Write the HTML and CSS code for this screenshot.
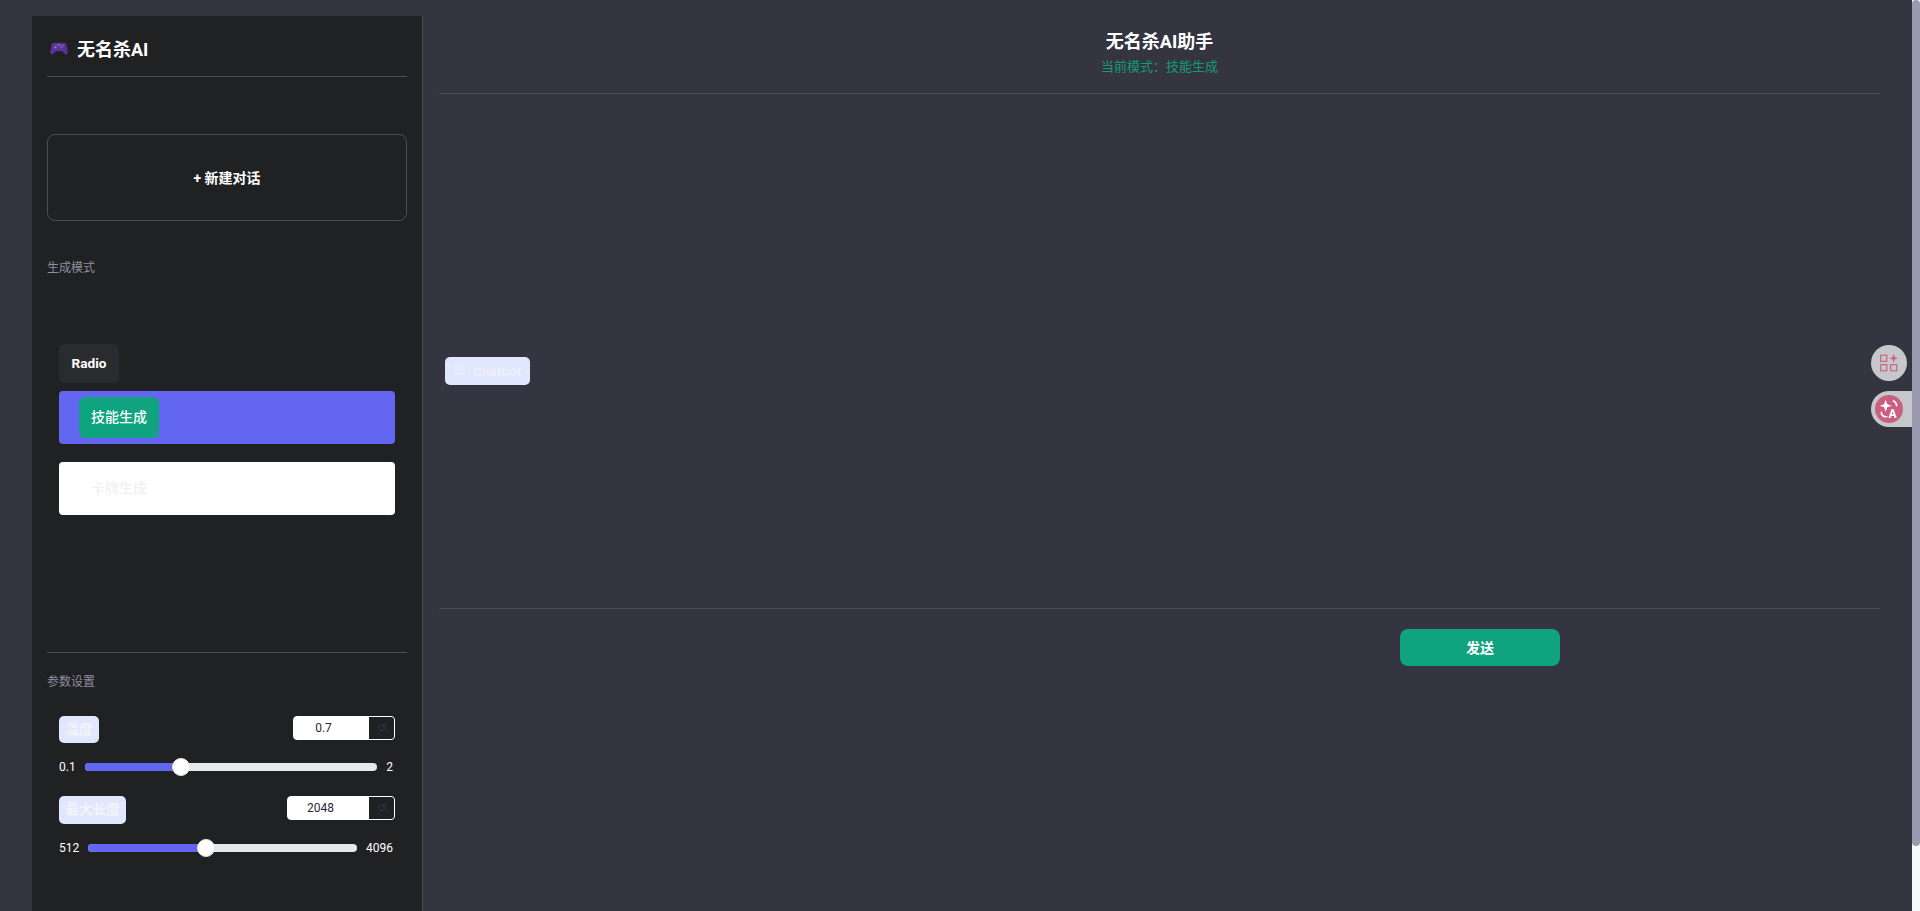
FILE: index.html
```html
<!doctype html>
<html lang="zh-CN">
<head>
	<meta charset="UTF-8">
	<title>无名杀AI助手</title>
	<link rel="stylesheet" href="styles.css">
</head>
<body>
	<div class="app">
		<aside class="sidebar">
			<div class="brand">
				<svg class="brand-icon" width="18" height="15" viewBox="0 0 20 16">
					<path d="M5 1.500h10c2 0 3 1.200 3.500 3.500l1.200 7c.3 2-1.700 3-3.200 1.700L13.500 11h-7l-3 2.700C2 15 0 14 .3 12l1.200-7C2 2.700 3 1.500 5 1.500z" fill="#5b3296"/>
					<circle cx="6" cy="6.500" r="1.300" fill="#8f74c4"/>
					<circle cx="9" cy="4" r=".7" fill="#b9a7e0"/>
					<circle cx="11" cy="4" r=".7" fill="#b9a7e0"/>
					<circle cx="14" cy="5" r=".9" fill="#4db4d8"/>
					<circle cx="12.500" cy="7" r=".9" fill="#d85a9a"/>
				</svg>
				<span class="brand-name">无名杀AI</span>
			</div>
			<button class="new-chat">+ 新建对话</button>
			<div class="section-title">生成模式</div>
			<div class="mode-group">
				<span class="tag-dark">Radio</span>
				<div class="mode-row mode-active"><span class="mode-pill">技能生成</span></div>
				<div class="mode-row"><span class="mode-pill">卡牌生成</span></div>
			</div>
			<div class="params">
				<div class="section-title">参数设置</div>
				<div class="param-head">
					<span class="tag-light">温度</span>
					<div class="num-box">
						<span class="num-value">0.7</span>
						<span class="num-reset">↺</span>
					</div>
				</div>
				<div class="slider-row">
					<span>0.1</span>
					<div class="track"><div class="fill" style="width:33%"><i class="thumb"></i></div></div>
					<span>2</span>
				</div>
				<div class="param-head param-second">
					<span class="tag-light">最大长度</span>
					<div class="num-box num-wide">
						<span class="num-value">2048</span>
						<span class="num-reset">↺</span>
					</div>
				</div>
				<div class="slider-row">
					<span>512</span>
					<div class="track"><div class="fill" style="width:44%"><i class="thumb"></i></div></div>
					<span>4096</span>
				</div>
			</div>
		</aside>
		<main class="main">
			<header class="main-head">
				<h1>无名杀AI助手</h1>
				<p>当前模式：技能生成</p>
			</header>
			<section class="chat">
				<span class="chat-label">
					<svg width="12" height="12" viewBox="0 0 12 12" fill="none" stroke="#eef0fb" stroke-width="1">
						<path d="M1 1.500h10v7H7.500L6 10.500 4.500 8.500H1z"/>
						<path d="M3 4h6"/>
					</svg>
					Chatbot
				</span>
			</section>
			<div class="send-row">
				<button class="send">发送</button>
			</div>
		</main>
	</div>
	<div class="float-tools">
		<div class="float-btn">
			<svg width="20" height="20" viewBox="0 0 18 18" fill="none" stroke="#c9607f" stroke-width="1">
				<rect x="1.500" y="2" width="5.500" height="5.500"/>
				<rect x="1.500" y="10.500" width="5.500" height="5.500"/>
				<rect x="10.500" y="10.500" width="5.500" height="5.500"/>
				<path d="M13.200 1l1 2.800 2.800 1-2.800 1-1 2.800-1-2.800-2.800-1 2.800-1z" fill="#c9607f" stroke="none"/>
			</svg>
		</div>
		<div class="float-btn float-wide">
			<span class="float-dot">
				<svg width="22" height="22" viewBox="0 0 20 20" fill="none" stroke="#fff" stroke-width="1.500">
					<path d="M7 1.500l1.400 4.100L12.500 7 8.400 8.400 7 12.500 5.600 8.400 1.500 7l4.100-1.400z" fill="#fff" stroke="none"/>
					<path d="M13.500 2.500c2 .8 3.500 2.500 3.500 5"/>
					<path d="M3 12.500c0 2.500 1.500 4.500 4 4.500h1.500"/>
					<text x="9.500" y="18" font-size="11" font-weight="700" fill="#fff" stroke="none" font-family="Roboto">A</text>
				</svg>
			</span>
		</div>
	</div>
	<div class="scrollbar"><div class="scroll-thumb"></div></div>
</body>
</html>
```

FILE: styles.css
```css
* {
	box-sizing: border-box;
}
html {
	overflow: hidden;
}
body {
	margin: 0;
	background: #353541;
	color: #fff;
	font-family: Roboto, "Noto Sans CJK SC", sans-serif;
}
.app {
	display: flex;
	height: 911px;
	padding: 16px 0 0 32px;
	overflow: hidden;
}

/* left column */
.sidebar {
	display: flex;
	flex-direction: column;
	flex: none;
	width: 391px;
	padding: 0 15px;
	background: #202123;
	border-right: 1px solid #4d4d4f;
}
.brand {
	display: flex;
	align-items: center;
	flex: none;
	height: 61px;
	padding: 4px 0 0 3px;
	gap: 9px;
	border-bottom: 1px solid #4d4d4f;
}
.brand-name {
	font-size: 18px;
	font-weight: 700;
}
.new-chat {
	flex: none;
	height: 87px;
	margin-top: 57px;
	padding: 0 0 2px;
	background: transparent;
	border: 1px solid #4d4d4f;
	border-radius: 8px;
	color: #fff;
	font: inherit;
	font-size: 14px;
	font-weight: 700;
}
.section-title {
	font-size: 12px;
	line-height: 18px;
	color: #8e8ea0;
}
.sidebar > .section-title {
	margin-top: 38px;
}
.mode-group {
	display: flex;
	flex-direction: column;
	align-items: flex-start;
	flex: none;
	height: 376px;
	padding: 67px 12px 0;
	border-bottom: 1px solid #4d4d4f;
}
.tag-dark {
	width: 60px;
	height: 39px;
	line-height: 39px;
	text-align: center;
	background: #2a2b2e;
	border-radius: 6px;
	font-size: 13.600px;
	font-weight: 700;
}
.mode-row {
	display: flex;
	align-items: center;
	align-self: stretch;
	height: 53px;
	margin: 8px 0 10px;
	padding-left: 20px;
	background: #fff;
	border-radius: 4px;
	color: #f0f1f5;
}
.mode-active {
	background: #6366f1;
	color: #fff;
}
.mode-active .mode-pill {
	background: #10a37f;
}
.mode-pill {
	display: block;
	width: 80px;
	height: 41px;
	line-height: 41px;
	text-align: center;
	border-radius: 6px;
	font-size: 14px;
	font-weight: 500;
}
.params {
	padding-top: 20px;
}
.param-head {
	display: flex;
	align-items: flex-start;
	justify-content: space-between;
	margin-top: 25px;
	padding: 0 12px;
}
.param-second {
	margin-top: 20px;
}
.tag-light {
	padding: 0 6.500px;
	height: 27px;
	line-height: 27px;
	background: #e0e7ff;
	border-radius: 5px;
	color: #f3f4f6;
	font-size: 13.600px;
	font-weight: 700;
}
.param-second .tag-light {
	height: 28px;
}
.num-box {
	display: flex;
	width: 102px;
	height: 24px;
	background: #fff;
	border: 1px solid #fff;
	border-radius: 4px;
	overflow: hidden;
}
.num-wide {
	width: 108px;
}
.num-value {
	flex: 1;
	padding-right: 16px;
	color: #1f2937;
	font-size: 12px;
	line-height: 22px;
	text-align: center;
}
.num-reset {
	flex: none;
	width: 25px;
	background: #202123;
	color: #2f3642;
	font-size: 12px;
	line-height: 22px;
	text-align: center;
}
.slider-row {
	display: flex;
	align-items: center;
	gap: 9px;
	height: 18px;
	margin-top: 15px;
	padding: 0 14px 0 12px;
	font-size: 12px;
}
.track {
	flex: 1;
	height: 8px;
	background: #e5e7eb;
	border-radius: 4px;
}
.fill {
	position: relative;
	height: 100%;
	background: #6366f1;
	border-radius: 4px;
}
.thumb {
	position: absolute;
	right: -9px;
	top: -5px;
	width: 18px;
	height: 18px;
	background: #fff;
	border: 1px solid #e5e7eb;
	border-radius: 50%;
}

/* right column */
.main {
	display: flex;
	flex-direction: column;
	flex: 1;
	align-self: flex-start;
	height: 720px;
	margin-top: -16px;
	padding: 0 40px 0 16px;
}
.main-head {
	height: 94px;
	padding-top: 29px;
	text-align: center;
	border-bottom: 1px solid #4d4d4f;
}
.main-head h1 {
	margin: 0;
	font-size: 18px;
	line-height: 26px;
	font-weight: 700;
}
.main-head p {
	margin: 2px 0 0;
	font-size: 13px;
	line-height: 20px;
	color: #109a78;
}
.chat {
	display: flex;
	align-items: center;
	height: 515px;
	padding: 40px 0 0 6px;
	border-bottom: 1px solid #4d4d4f;
}
.chat-label {
	display: flex;
	align-items: center;
	gap: 8px;
	width: 85px;
	height: 28px;
	padding-left: 8px;
	background: #e0e7ff;
	border-radius: 5px;
	color: #eef0fb;
	font-size: 13.600px;
	font-weight: 700;
	white-space: nowrap;
}
.send-row {
	display: flex;
	justify-content: flex-end;
	padding: 20px 320px 0 0;
}
.send {
	width: 160px;
	height: 37px;
	padding: 0 0 2px;
	background: #10a37f;
	border: 0;
	border-radius: 8px;
	color: #fff;
	font: inherit;
	font-size: 14px;
	font-weight: 700;
}

/* things drawn over the right edge */
.float-tools {
	position: fixed;
	right: 8px;
	top: 345px;
	display: flex;
	flex-direction: column;
	align-items: flex-end;
	gap: 10px;
}
.float-btn {
	display: flex;
	align-items: center;
	justify-content: center;
	width: 36px;
	height: 36px;
	margin-right: 5px;
	background: #c6c7cb;
	border-radius: 50%;
}
.float-wide {
	justify-content: flex-start;
	width: 41px;
	margin-right: 0;
	padding-left: 4px;
	border-radius: 18px 0 0 18px;
}
.float-dot {
	display: flex;
	align-items: center;
	justify-content: center;
	width: 28px;
	height: 28px;
	background: #c9607f;
	border-radius: 50%;
}
.scrollbar {
	position: fixed;
	top: 0;
	right: 0;
	width: 8px;
	height: 100%;
	background: #f9f9fb;
}
.scroll-thumb {
	height: 846px;
	background: #9a99ad;
	border-radius: 4px;
}
```
